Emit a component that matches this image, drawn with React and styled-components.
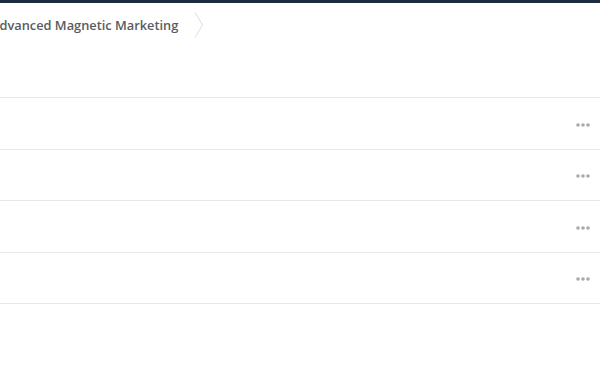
import React from 'react';
import styled, { createGlobalStyle } from 'styled-components';

const GlobalStyle = createGlobalStyle`
    html, body {
        margin: 0;
        padding: 0;
        background: #fff;
        font-family: "Open Sans", "Liberation Sans", sans-serif;
    }
`;

const Page = styled.div`
    width: 600px;
    height: 370px;
    overflow: hidden;
    border-top: 3px solid #1d2b40;
    box-sizing: border-box;
`;

const Header = styled.div`
    display: flex;
    align-items: center;
    height: 44px;
    margin-left: -9px;
    gap: 16px;
`;

const Crumb = styled.span`
    font-size: 12.8px;
    font-weight: 600;
    color: #585c62;
    white-space: nowrap;
`;

const Chevron = styled.svg`
    display: block;
    flex-shrink: 0;
`;

const List = styled.div`
    margin-top: 50px;
    border-bottom: 1px solid #e8e8e8;
`;

const Row = styled.div`
    display: flex;
    align-items: center;
    justify-content: flex-end;
    height: 50.5px;
    border-top: 1px solid #e8e8e8;
    padding-right: 10px;
`;

const More = styled.svg`
    display: block;
    margin-top: 3px;
`;

const rows = [1, 2, 3, 4];

export default function App() {
    return (
        <Page>
            <GlobalStyle />
            <Header>
                <Crumb>Advanced Magnetic Marketing</Crumb>
                <Chevron width="10" height="26" viewBox="0 0 10 26">
                    <path d="M1 0.5 L8.5 13 L1 25.5" fill="none" stroke="#dcdcdc" strokeWidth="1" />
                </Chevron>
            </Header>
            <List>
                {rows.map(r => (
                    <Row key={r}>
                        <More width="14" height="4" viewBox="0 0 14 4">
                            <circle cx="2" cy="2" r="1.8" fill="#aaaaaa" />
                            <circle cx="7" cy="2" r="1.8" fill="#aaaaaa" />
                            <circle cx="12" cy="2" r="1.8" fill="#aaaaaa" />
                        </More>
                    </Row>
                ))}
            </List>
        </Page>
    );
}
